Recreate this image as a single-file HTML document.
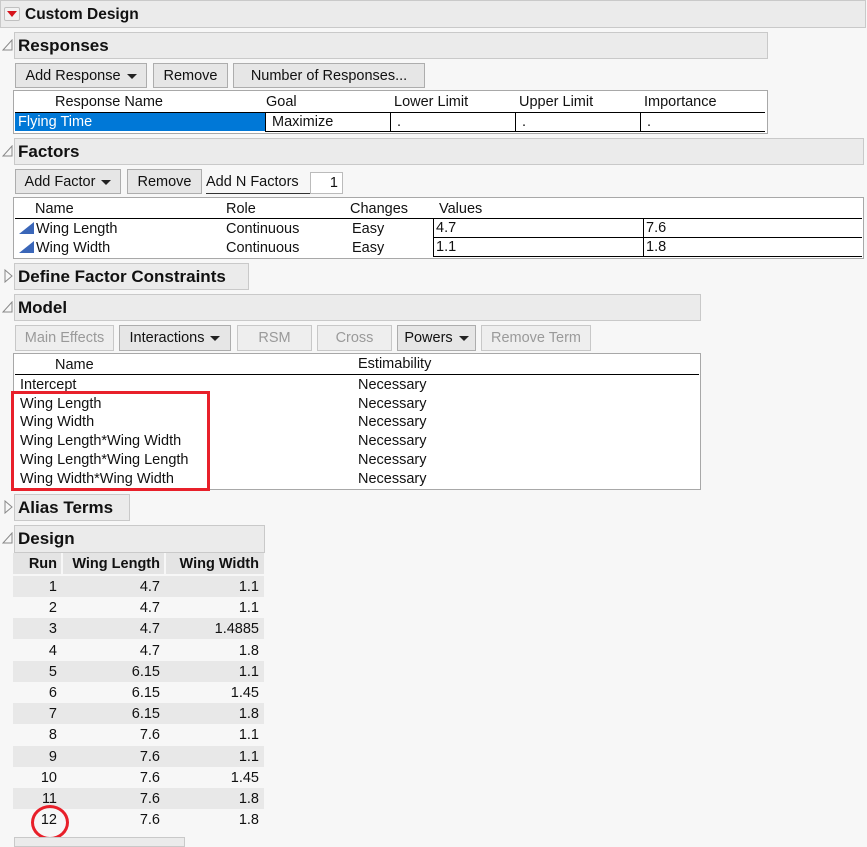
<!DOCTYPE html>
<html><head><meta charset="utf-8"><style>
*{box-sizing:border-box;margin:0;padding:0}
body{width:867px;height:840px;overflow:hidden;background:#f7f7f7;font-family:"Liberation Sans",sans-serif;font-size:14.5px;color:#111;position:relative}
.a{position:absolute;white-space:nowrap}
.hd{position:absolute;background:#ebebeb;border:1px solid #c9c9c9;font-weight:bold;font-size:17px;padding-left:3px;line-height:25px}
.btn{position:absolute;background:#e6e6e6;border:1px solid #adadad;text-align:center;line-height:24px;font-size:14.5px}
.dis{color:#9a9a9a;border-color:#c8c8c8;background:#eeeeee}
.tbl{position:absolute;background:#fff;border:1px solid #a8a8a8}
.dd{display:inline-block;width:0;height:0;border-left:5px solid transparent;border-right:5px solid transparent;border-top:5px solid #222;vertical-align:middle;margin-left:6px}
.tri{position:absolute;width:0;height:0}
.cell{position:absolute;border-left:1px solid #000;border-bottom:1px solid #000;padding-left:2px;line-height:18px}
</style></head><body>
<div class="hd" style="left:0;top:0;width:866px;height:28px;padding-left:24px;line-height:28px;font-size:15.5px">Custom Design</div>
<div class="a" style="left:4px;top:7px;width:16px;height:14px;background:#f2f2f2;border:1px solid #c0c0c0;border-radius:2px"></div>
<div class="tri" style="left:7px;top:11px;border-left:5px solid transparent;border-right:5px solid transparent;border-top:6px solid #d6141c"></div>

<svg class="a" style="left:2px;top:39px" width="11" height="12"><path d="M10 1 L10 11 L1 11 Z" fill="none" stroke="#888"/></svg>
<div class="hd" style="left:14px;top:32px;width:754px;height:27px">Responses</div>
<div class="btn" style="left:15px;top:63px;width:132px;height:25px">Add Response<span class="dd"></span></div>
<div class="btn" style="left:153px;top:63px;width:75px;height:25px">Remove</div>
<div class="btn" style="left:233px;top:63px;width:192px;height:25px">Number of Responses...</div>
<div class="tbl" style="left:13px;top:90px;width:755px;height:44px"></div>
<div class="a" style="left:55px;top:94px">Response Name</div>
<div class="a" style="left:266px;top:94px">Goal</div>
<div class="a" style="left:394px;top:94px">Lower Limit</div>
<div class="a" style="left:519px;top:94px">Upper Limit</div>
<div class="a" style="left:644px;top:94px">Importance</div>
<div class="a" style="left:15px;top:112px;width:750px;border-top:1px solid #000"></div>
<div class="a" style="left:15px;top:113px;width:250px;height:18px;background:#0078d7;color:#fff;padding-left:3px;line-height:19px">Flying Time</div>
<div class="cell" style="left:265px;top:113px;width:125px;height:19px">&nbsp;Maximize</div>
<div class="cell" style="left:390px;top:113px;width:125px;height:19px">&nbsp;.</div>
<div class="cell" style="left:515px;top:113px;width:125px;height:19px">&nbsp;.</div>
<div class="cell" style="left:640px;top:113px;width:125px;height:19px">&nbsp;.</div>

<svg class="a" style="left:2px;top:145px" width="11" height="12"><path d="M10 1 L10 11 L1 11 Z" fill="none" stroke="#888"/></svg>
<div class="hd" style="left:14px;top:138px;width:850px;height:27px">Factors</div>
<div class="btn" style="left:15px;top:169px;width:106px;height:25px">Add Factor<span class="dd"></span></div>
<div class="btn" style="left:127px;top:169px;width:75px;height:25px">Remove</div>
<div class="a" style="left:206px;top:174px;border-bottom:1px solid #333;width:104px;height:20px">Add N Factors</div>
<div class="a" style="left:310px;top:172px;width:33px;height:22px;background:#fff;border:1px solid #bbb;text-align:right;padding-right:4px;line-height:21px">1</div>
<div class="tbl" style="left:13px;top:197px;width:851px;height:62px"></div>
<div class="a" style="left:35px;top:201px">Name</div>
<div class="a" style="left:226px;top:201px">Role</div>
<div class="a" style="left:350px;top:201px">Changes</div>
<div class="a" style="left:439px;top:201px">Values</div>
<div class="a" style="left:15px;top:218px;width:847px;border-top:1px solid #000"></div>
<svg class="a" style="left:19px;top:222px" width="16" height="12"><path d="M15 0 L15 12 L0 12 Z" fill="#3a66b8"/></svg>
<svg class="a" style="left:19px;top:241px" width="16" height="12"><path d="M15 0 L15 12 L0 12 Z" fill="#3a66b8"/></svg>
<div class="a" style="left:36px;top:221px">Wing Length</div>
<div class="a" style="left:226px;top:221px">Continuous</div>
<div class="a" style="left:352px;top:221px">Easy</div>
<div class="a" style="left:36px;top:240px">Wing Width</div>
<div class="a" style="left:226px;top:240px">Continuous</div>
<div class="a" style="left:352px;top:240px">Easy</div>
<div class="cell" style="left:433px;top:219px;width:210px;height:19px">4.7</div>
<div class="cell" style="left:643px;top:219px;width:219px;height:19px">7.6</div>
<div class="cell" style="left:433px;top:238px;width:210px;height:19px">1.1</div>
<div class="cell" style="left:643px;top:238px;width:219px;height:19px">1.8</div>

<svg class="a" style="left:4px;top:269px" width="9" height="14"><path d="M1 1 L8 7 L1 13 Z" fill="none" stroke="#888"/></svg>
<div class="hd" style="left:14px;top:263px;width:235px;height:27px">Define Factor Constraints</div>

<svg class="a" style="left:2px;top:301px" width="11" height="12"><path d="M10 1 L10 11 L1 11 Z" fill="none" stroke="#888"/></svg>
<div class="hd" style="left:14px;top:294px;width:687px;height:27px">Model</div>
<div class="btn dis" style="left:15px;top:325px;width:99px;height:26px">Main Effects</div>
<div class="btn" style="left:119px;top:325px;width:112px;height:26px">Interactions<span class="dd"></span></div>
<div class="btn dis" style="left:237px;top:325px;width:75px;height:26px">RSM</div>
<div class="btn dis" style="left:317px;top:325px;width:75px;height:26px">Cross</div>
<div class="btn" style="left:397px;top:325px;width:79px;height:26px">Powers<span class="dd"></span></div>
<div class="btn dis" style="left:481px;top:325px;width:110px;height:26px">Remove Term</div>
<div class="tbl" style="left:13px;top:353px;width:688px;height:137px"></div>
<div class="a" style="left:55px;top:357px">Name</div>
<div class="a" style="left:358px;top:356px">Estimability</div>
<div class="a" style="left:15px;top:374px;width:684px;border-top:1px solid #000"></div>
<div class="a" style="left:20px;top:376px;line-height:18.7px">Intercept<br>Wing Length<br>Wing Width<br>Wing Length*Wing Width<br>Wing Length*Wing Length<br>Wing Width*Wing Width</div>
<div class="a" style="left:358px;top:376px;line-height:18.7px">Necessary<br>Necessary<br>Necessary<br>Necessary<br>Necessary<br>Necessary</div>
<div class="a" style="left:11px;top:391px;width:199px;height:100px;border:3px solid #e8202a"></div>

<svg class="a" style="left:4px;top:500px" width="9" height="14"><path d="M1 1 L8 7 L1 13 Z" fill="none" stroke="#888"/></svg>
<div class="hd" style="left:14px;top:494px;width:116px;height:27px">Alias Terms</div>
<svg class="a" style="left:2px;top:532px" width="11" height="12"><path d="M10 1 L10 11 L1 11 Z" fill="none" stroke="#888"/></svg>
<div class="hd" style="left:14px;top:525px;width:251px;height:28px">Design</div>

<div class="a" style="left:13px;top:553px;width:251px;height:21px;background:#e4e4e4"></div>
<div class="a" style="left:61px;top:553px;width:2px;height:21px;background:#f7f7f7"></div>
<div class="a" style="left:164px;top:553px;width:2px;height:21px;background:#f7f7f7"></div>
<div class="a" style="left:13px;top:556px;width:44px;text-align:right;font-weight:bold">Run</div>
<div class="a" style="left:63px;top:556px;width:97px;text-align:right;font-weight:bold">Wing Length</div>
<div class="a" style="left:166px;top:556px;width:93px;text-align:right;font-weight:bold">Wing Width</div>
<div class="a" style="left:13px;top:576px;width:251px;height:21px;background:#e8e8e8"></div>
<div class="a" style="left:13px;top:618px;width:251px;height:21px;background:#e8e8e8"></div>
<div class="a" style="left:13px;top:661px;width:251px;height:21px;background:#e8e8e8"></div>
<div class="a" style="left:13px;top:703px;width:251px;height:21px;background:#e8e8e8"></div>
<div class="a" style="left:13px;top:746px;width:251px;height:21px;background:#e8e8e8"></div>
<div class="a" style="left:13px;top:788px;width:251px;height:21px;background:#e8e8e8"></div>
<div class="a" style="left:13px;top:577px;width:44px;text-align:right;line-height:21.2px">1<br>2<br>3<br>4<br>5<br>6<br>7<br>8<br>9<br>10<br>11<br>12</div>
<div class="a" style="left:63px;top:577px;width:97px;text-align:right;line-height:21.2px">4.7<br>4.7<br>4.7<br>4.7<br>6.15<br>6.15<br>6.15<br>7.6<br>7.6<br>7.6<br>7.6<br>7.6</div>
<div class="a" style="left:166px;top:577px;width:93px;text-align:right;line-height:21.2px">1.1<br>1.1<br>1.4885<br>1.8<br>1.1<br>1.45<br>1.8<br>1.1<br>1.1<br>1.45<br>1.8<br>1.8</div>
<div class="a" style="left:31px;top:805px;width:38px;height:35px;border:3px solid #e8202a;border-radius:50%"></div>
<div class="a" style="left:14px;top:837px;width:171px;height:10px;border:1px solid #c9c9c9;background:#ebebeb"></div>
</body></html>
